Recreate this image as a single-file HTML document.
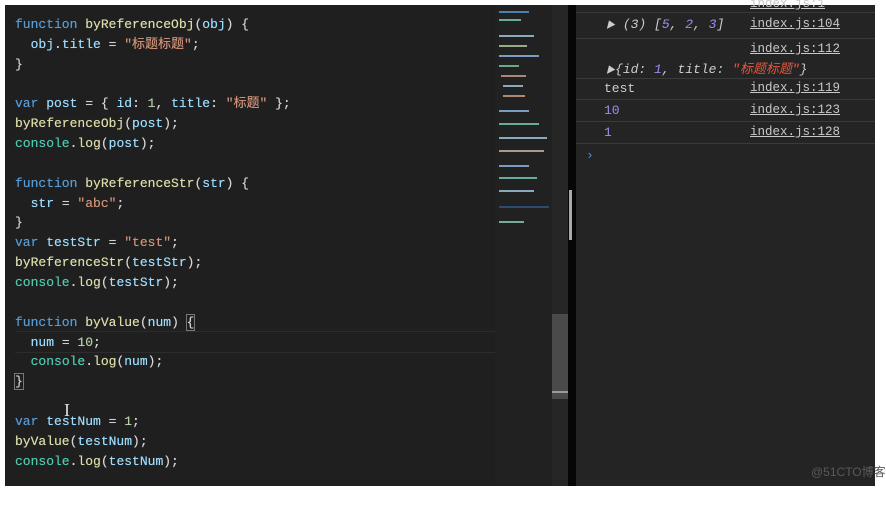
<!DOCTYPE html><html><head><meta charset="utf-8"><style>
body{margin:0;width:886px;height:505px;background:#fff;overflow:hidden;position:relative;font-family:"Liberation Mono","Noto Sans CJK SC",monospace}
.ed{position:absolute;left:5px;top:5px;width:490px;height:481px;background:#1f1f1f}
.mm{position:absolute;left:495px;top:5px;width:57px;height:481px;background:#212121}
.sb{position:absolute;left:552px;top:5px;width:16px;height:481px;background:#262626}
.div{position:absolute;left:568px;top:5px;width:8px;height:481px;background:#060606}
.con{position:absolute;left:576px;top:5px;width:299px;height:481px;background:#242424}
.code{position:absolute;left:15px;top:15px;font-size:13px;line-height:19.85px;white-space:pre;color:#d4d4d4;text-shadow:0 0 0.4px currentColor}
.k{color:#569cd6}.f{color:#dcdcaa}.v{color:#9cdcfe}.s{color:#ce9178}.c{color:#4ec9b0}.n{color:#b5cea8}
.row{position:absolute;left:0;width:299px;border-bottom:1px solid #3a3a3a;font-size:13px;color:#ccc}
.lnk{position:absolute;left:174px;text-decoration:underline;color:#c8c8c8;font-size:12.5px}
.bar{position:absolute;height:2px}
</style></head><body>
<div class="ed">
<div style="position:absolute;left:10px;top:326px;width:480px;height:20px;border-top:1px solid #2c2c2c;border-bottom:1px solid #2c2c2c"></div>
</div>
<div class="code"><span class="k">function</span> <span class="f">byReferenceObj</span>(<span class="v">obj</span>) {
  <span class="v">obj</span>.<span class="v">title</span> = <span class="s">"标题标题"</span>;
}

<span class="k">var</span> <span class="v">post</span> = { <span class="v">id</span>: <span class="n">1</span>, <span class="v">title</span>: <span class="s">"标题"</span> };
<span class="f">byReferenceObj</span>(<span class="v">post</span>);
<span class="c">console</span>.<span class="f">log</span>(<span class="v">post</span>);

<span class="k">function</span> <span class="f">byReferenceStr</span>(<span class="v">str</span>) {
  <span class="v">str</span> = <span class="s">"abc"</span>;
}
<span class="k">var</span> <span class="v">testStr</span> = <span class="s">"test"</span>;
<span class="f">byReferenceStr</span>(<span class="v">testStr</span>);
<span class="c">console</span>.<span class="f">log</span>(<span class="v">testStr</span>);

<span class="k">function</span> <span class="f">byValue</span>(<span class="v">num</span>) <span style="outline:1px solid #777">{</span>
  <span class="v">num</span> = <span class="n">10</span>;
  <span class="c">console</span>.<span class="f">log</span>(<span class="v">num</span>);
<span style="outline:1px solid #777">}</span>

<span class="k">var</span> <span class="v">testNum</span> = <span class="n">1</span>;
<span class="f">byValue</span>(<span class="v">testNum</span>);
<span class="c">console</span>.<span class="f">log</span>(<span class="v">testNum</span>);</div>
<div style="position:absolute;left:64px;top:400px;color:#ddd;font-size:18px;font-family:'Liberation Serif',serif">I</div>
<div class="mm">
<div class="bar" style="left:4px;top:6px;width:30px;background:#4a7fb0"></div>
<div class="bar" style="left:4px;top:14px;width:22px;background:#6a9"></div>
<div class="bar" style="left:4px;top:30px;width:35px;background:#8ab"></div>
<div class="bar" style="left:4px;top:40px;width:28px;background:#9a8"></div>
<div class="bar" style="left:4px;top:50px;width:40px;background:#7a9cc0"></div>
<div class="bar" style="left:4px;top:60px;width:20px;background:#6a8"></div>
<div class="bar" style="left:6px;top:70px;width:25px;background:#a87"></div>
<div class="bar" style="left:8px;top:80px;width:20px;background:#8ab"></div>
<div class="bar" style="left:8px;top:90px;width:22px;background:#a87"></div>
<div class="bar" style="left:4px;top:105px;width:30px;background:#7a9cc0"></div>
<div class="bar" style="left:4px;top:118px;width:40px;background:#6a9"></div>
<div class="bar" style="left:4px;top:132px;width:48px;background:#8ab"></div>
<div class="bar" style="left:4px;top:145px;width:45px;background:#a98"></div>
<div class="bar" style="left:4px;top:160px;width:30px;background:#7a9cc0"></div>
<div class="bar" style="left:4px;top:172px;width:38px;background:#6a9"></div>
<div class="bar" style="left:4px;top:185px;width:35px;background:#8ab"></div>
<div class="bar" style="left:4px;top:201px;width:50px;background:#2d4a70"></div>
<div class="bar" style="left:4px;top:216px;width:25px;background:#7a9"></div>
</div>
<div class="sb"><div style="position:absolute;left:0;top:309px;width:16px;height:85px;background:#4a4a4a"></div><div style="position:absolute;left:0;top:386px;width:16px;height:2px;background:#999"></div></div>
<div class="div"><div style="position:absolute;left:1px;top:185px;width:3px;height:50px;background:#aaa"></div></div>
<div class="con">
<div class="row" style="top:-8px;height:15px;color:#777"><span class="lnk" style="top:0">index.js:1</span></div>
<div class="row" style="top:8px;height:25px"><span style="position:absolute;left:30px;top:4px;font-style:italic"><span style="font-size:9px">▶</span> (3) [<span style="color:#9d8cf0">5</span>, <span style="color:#9d8cf0">2</span>, <span style="color:#9d8cf0">3</span>]</span><span class="lnk" style="top:4px">index.js:104</span></div>
<div class="row" style="top:34px;height:39px"><span class="lnk" style="top:3px">index.js:112</span><span style="position:absolute;left:30px;top:19px;font-style:italic"><span style="font-size:9px">▶</span>{id: <span style="color:#9d8cf0">1</span>, title: <span style="color:#e8553a">"标题标题"</span>}</span></div>
<div class="row" style="top:74px;height:20px"><span style="position:absolute;left:28px;top:2px">test</span><span class="lnk" style="top:2px">index.js:119</span></div>
<div class="row" style="top:95px;height:21px"><span style="position:absolute;left:28px;top:3px;color:#9d8cf0">10</span><span class="lnk" style="top:3px">index.js:123</span></div>
<div class="row" style="top:117px;height:21px"><span style="position:absolute;left:28px;top:3px;color:#9d8cf0">1</span><span class="lnk" style="top:3px">index.js:128</span></div>
<div style="position:absolute;left:10px;top:143px;color:#4a90e2;font-size:13px">›</div>
</div>
<div style="position:absolute;left:811px;top:463px;font-family:'Liberation Sans','Noto Sans CJK SC',sans-serif;font-size:12px;color:#5a5a5a">@51CTO博客</div>
</body></html>
